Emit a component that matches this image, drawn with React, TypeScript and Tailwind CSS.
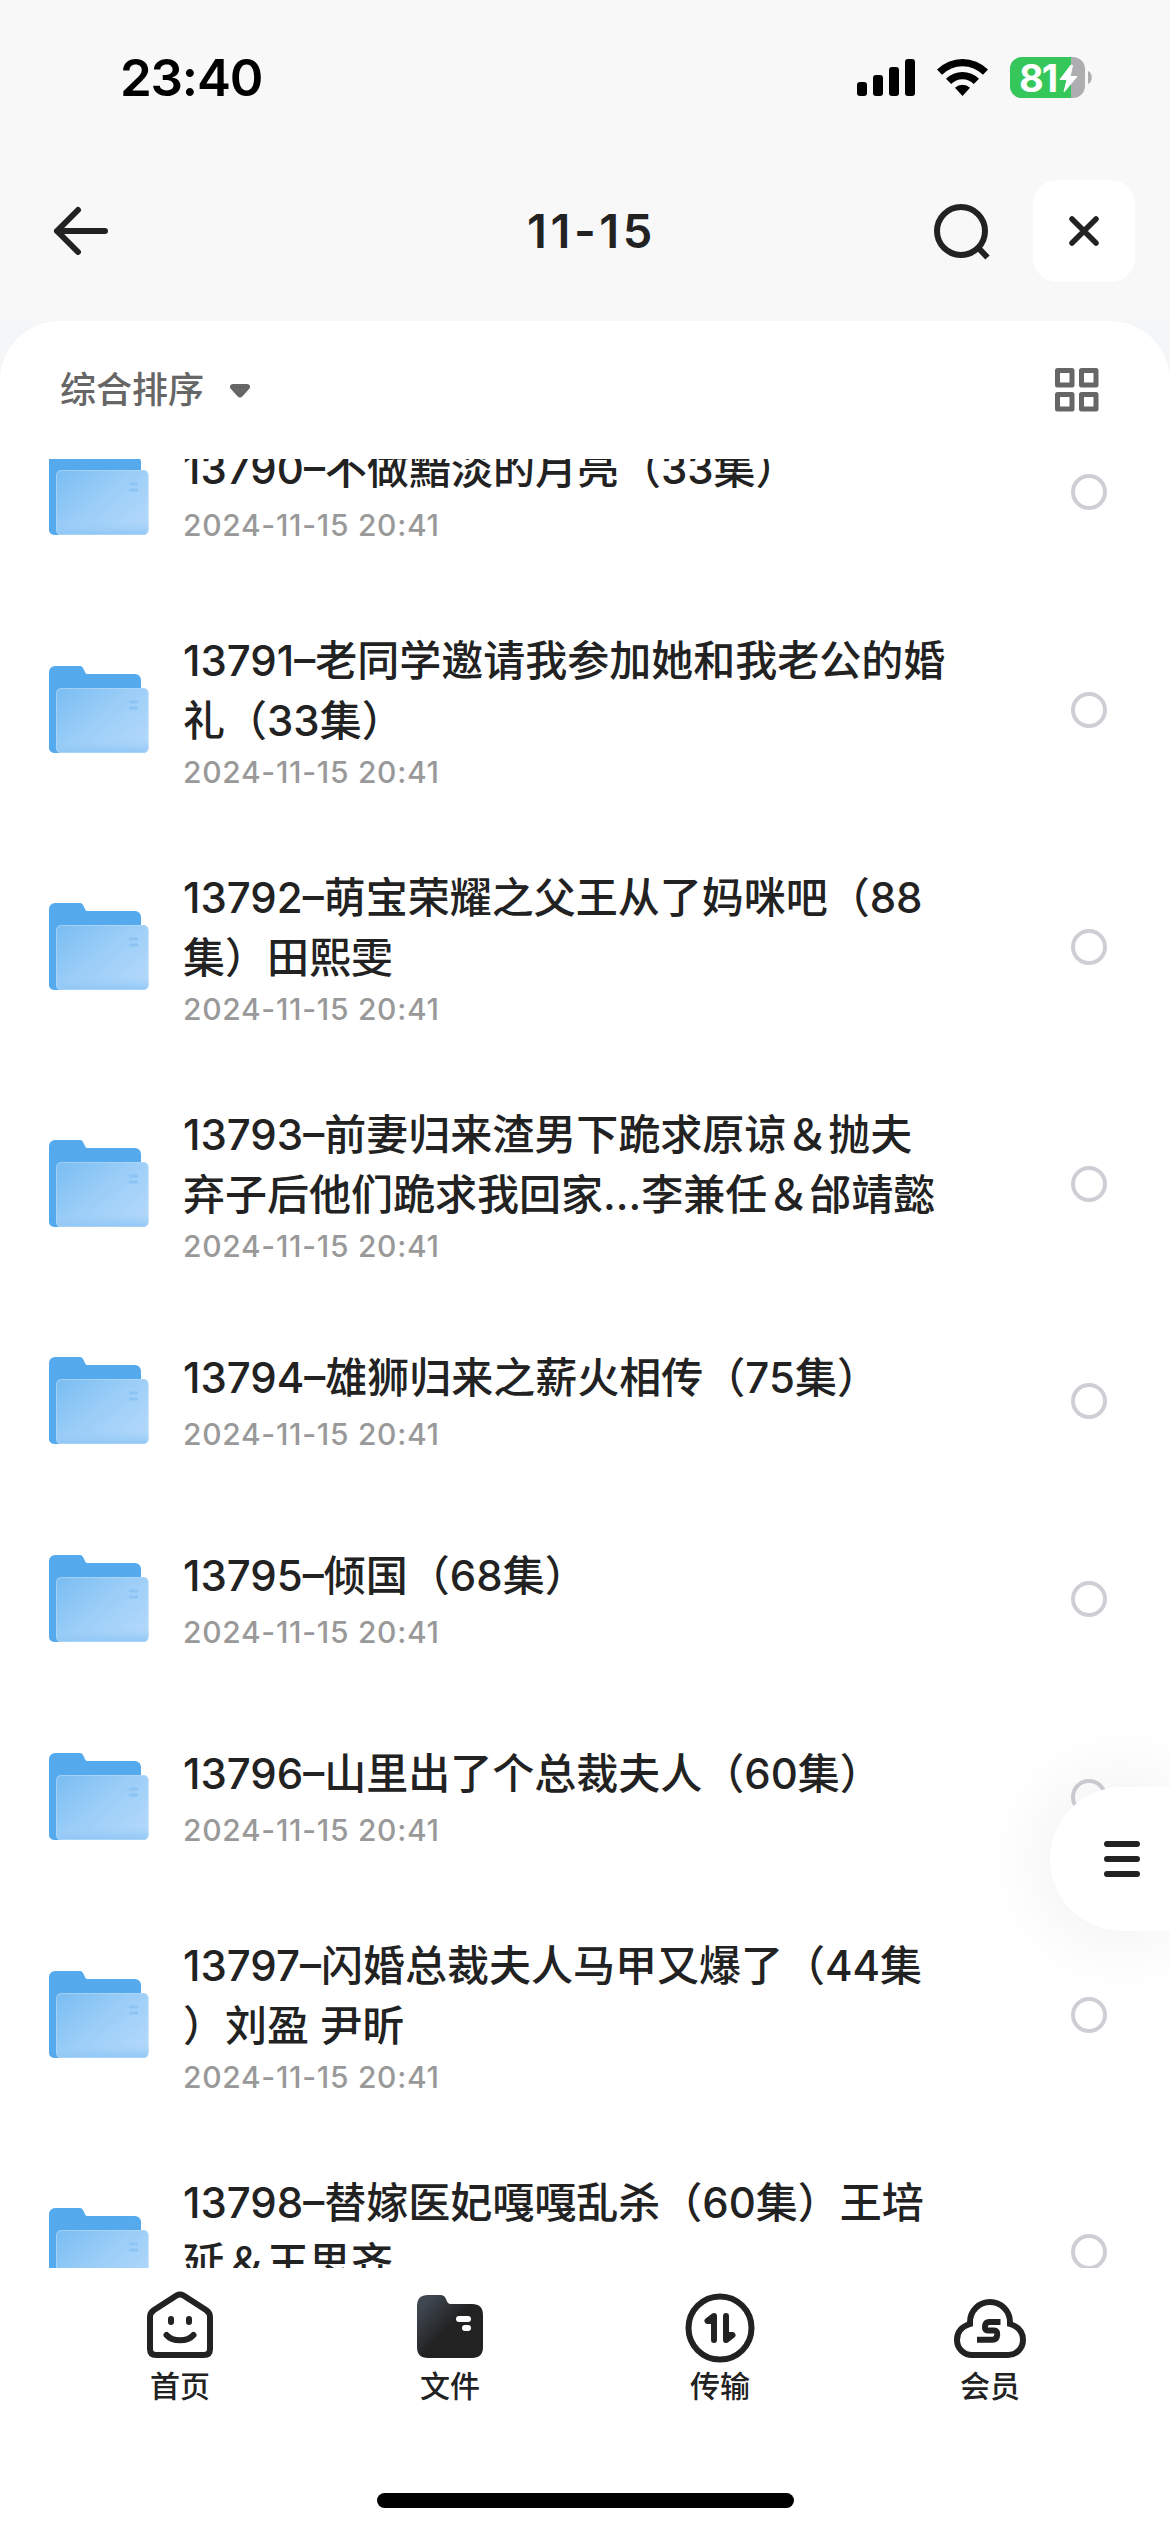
type FileItem = { lines: string[]; date: string };

const files: FileItem[] = [
  { lines: ["13790–不做黯淡的月亮（33集）"], date: "2024-11-15 20:41" },
  { lines: ["13791–老同学邀请我参加她和我老公的婚", "礼（33集）"], date: "2024-11-15 20:41" },
  { lines: ["13792–萌宝荣耀之父王从了妈咪吧（88", "集）田熙雯"], date: "2024-11-15 20:41" },
  { lines: ["13793–前妻归来渣男下跪求原谅＆抛夫", "弃子后他们跪求我回家…李兼任＆邰靖懿"], date: "2024-11-15 20:41" },
  { lines: ["13794–雄狮归来之薪火相传（75集）"], date: "2024-11-15 20:41" },
  { lines: ["13795–倾国（68集）"], date: "2024-11-15 20:41" },
  { lines: ["13796–山里出了个总裁夫人（60集）"], date: "2024-11-15 20:41" },
  { lines: ["13797–闪婚总裁夫人马甲又爆了（44集", "）刘盈 尹昕"], date: "2024-11-15 20:41" },
  { lines: ["13798–替嫁医妃嘎嘎乱杀（60集）王培", "延＆王思齐"], date: "2024-11-15 20:41" },
];

const StatusBar = () => (
  <div className="flex h-[156px] justify-between pl-[120px] pr-[77px] pt-[57px]">
    <div className="text-[51px] font-semibold leading-[42px] tracking-[-1.2px] text-black">23:40</div>
    <div className="flex items-start">
      <svg width="60" height="41" viewBox="0 0 60 41" className="mr-[20px]">
        <rect x="0" y="25" width="10" height="14" rx="3" />
        <rect x="16" y="18" width="10" height="21" rx="3" />
        <rect x="32" y="10" width="10" height="29" rx="3" />
        <rect x="48" y="2" width="10" height="37" rx="3" />
      </svg>
      <svg width="51" height="41" viewBox="0 0 51 41" className="mr-[22px]">
        <path d="M0 12.5a36 36 0 0 1 51 0l-5 5.2a29 29 0 0 0-41 0z" />
        <path d="M9 21.7a23.5 23.5 0 0 1 33 0l-5.2 5.2a16 16 0 0 0-22.6 0z" />
        <path d="M18 30.7a11 11 0 0 1 15 0L25.5 39z" />
      </svg>
      {/* battery */}
      <div className="relative h-[41px] w-[83px]">
        <div className="flex h-[41px] w-[75px] overflow-hidden rounded-[12px] bg-[#aeaeb0]">
          <div className="h-full w-[61px] bg-[#35c759]" />
        </div>
        <span className="absolute left-[9px] top-0 text-[38px] font-bold leading-[42px] tracking-[-2px] text-white">
          81
        </span>
        <svg width="20" height="29" viewBox="0 0 20 29" className="absolute left-[49px] top-[7px]">
          <path d="M12 1 1 15.5h7L5 28 18 12.5h-7L13.5 1.5z" fill="#fff" stroke="#fff" strokeLinejoin="round" />
        </svg>
        <svg width="5" height="14" viewBox="0 0 5 14" className="absolute left-[78px] top-[14px]">
          <path d="M0 0c5 2 5 11 0 13z" fill="#aeaeb0" />
        </svg>
      </div>
    </div>
  </div>
);

const Header = () => (
  <div className="grid h-[165px] grid-cols-3 items-start pl-[52px] pr-[36px] pt-[24px]">
    <svg width="60" height="102" viewBox="0 0 60 102" fill="none" stroke="#222" strokeWidth="6" strokeLinecap="round" strokeLinejoin="round">
      <path d="M26 30 5 51l21 21M5 51h48" />
    </svg>
    <div className="pr-[3px] text-center text-[47px] font-semibold leading-[102px] tracking-[3.6px] text-[#222]">
      11-15
    </div>
    <div className="flex items-center justify-end">
      <svg width="60" height="60" viewBox="0 0 60 60" fill="none" stroke="#222" strokeWidth="6" className="mr-[40px]">
        <circle cx="28" cy="30" r="24" />
        <path d="m44.5 46 10 10.5" />
      </svg>
      <div className="mr-[-1px] flex size-[102px] items-center justify-center rounded-[24px] bg-white">
        <svg width="30" height="30" viewBox="0 0 30 30" stroke="#222" strokeWidth="5.5" strokeLinecap="round">
          <path d="m3 3 24 24M27 3 3 27" />
        </svg>
      </div>
    </div>
  </div>
);

const SortBar = () => (
  <div className="flex h-[138px] shrink-0 items-center justify-between pl-[60px] pr-[70px]">
    <div className="flex items-center gap-[26px] text-[36px] font-medium leading-[52px] text-[#666]">
      综合排序
      <svg width="20" height="14" viewBox="0 0 20 14" className="mt-[2px]">
        <path d="M3 0h14c3 0 4 3 2 5l-6.5 7.2a3.5 3.5 0 0 1-5 0L1 5C-1 3 0 0 3 0z" fill="#666" />
      </svg>
    </div>
    <svg width="45" height="45" viewBox="0 0 45 45" fill="none" stroke="#666" strokeWidth="5" strokeLinejoin="round">
      <rect x="2.5" y="2.5" width="14.5" height="14.5" />
      <rect x="26.5" y="2.5" width="14.5" height="14.5" />
      <rect x="2.5" y="26.5" width="14.5" height="14.5" />
      <rect x="26.5" y="26.5" width="14.5" height="14.5" />
    </svg>
  </div>
);

const FolderIcon = () => (
  <svg width="100" height="88" viewBox="0 0 100 88" className="shrink-0">
    <path d="M0 6a6 6 0 0 1 6-6h25c4 0 4.5 8 7 8h48a6 6 0 0 1 6 6v60L8 87H5a5 5 0 0 1-5-5z" fill="#55aaee" />
    <rect x="7" y="22" width="92.5" height="65" rx="5" fill="url(#folderFront)" />
    <rect x="7" y="72" width="92.5" height="15" rx="5" fill="url(#folderFoot)" />
    <rect x="7.5" y="22.5" width="91.5" height="64" rx="5" fill="none" stroke="#b9dcf8" strokeOpacity=".6" />
    <rect x="80" y="34.5" width="9" height="3" rx="1" fill="#8cc4f5" />
    <rect x="80" y="40.5" width="9" height="3" rx="1" fill="#8cc4f5" />
  </svg>
);

const FileRow = ({ file }: { file: FileItem }) => {
  const single = file.lines.length === 1;

  return (
    <div
      className={`flex shrink-0 items-center pl-[49px] pr-[63px] ${single ? "h-[198px]" : "h-[237px]"}`}
    >
      <FolderIcon />
      <div className={`ml-[34px] flex-1 ${single ? "pt-px" : "pt-[5px]"}`}>
        <div className="text-[42px] font-medium leading-[60px] text-[#222]">
          {file.lines.map((line) => (
            <div key={line} className="whitespace-nowrap">
              {line}
            </div>
          ))}
        </div>
        <div
          className={`text-[30px] font-medium leading-[42px] tracking-[0.7px] text-[#999] ${single ? "mt-[5px]" : "mt-0"}`}
        >
          {file.date}
        </div>
      </div>
      <div className="size-[36px] rounded-full border-[4px] border-[#cfced5]" />
    </div>
  );
};

const HomeIcon = () => (
  <svg width="72" height="72" viewBox="0 0 72 72" fill="none" stroke="#222" strokeWidth="6" strokeLinejoin="round">
    <path d="M32.5 6.5a7 7 0 0 1 7 0L62 21q4 2.8 4 7v32q0 6-6 6H12q-6 0-6-6V28q0-4.2 4-7z" />
    <path d="M27 30v3M45 30v3" strokeLinecap="round" />
    <path d="M22.5 46c6 7 21 7 27 0" strokeLinecap="round" />
  </svg>
);

const FilesIcon = () => (
  <svg width="72" height="72" viewBox="0 0 72 72">
    <path d="M3 17Q3 6 14 6h13c6 0 5 9 9 9h22q11 0 11 11v32q0 11-11 11H14Q3 69 3 58z" fill="url(#tabFolder)" />
    <rect x="42" y="27" width="15" height="6" rx="3" fill="#fff" />
    <rect x="48" y="36" width="9" height="6" rx="3" fill="#fff" />
  </svg>
);

const TransferIcon = () => (
  <svg
    width="72"
    height="72"
    viewBox="0 0 72 72"
    fill="none"
    stroke="#222"
    strokeWidth="6"
    strokeLinecap="round"
    strokeLinejoin="round"
    className="overflow-visible"
  >
    <circle cx="36" cy="39" r="31.5" />
    <path d="M30 51V27l-6.5 5H30M42 27v24l6.5-5H42" />
  </svg>
);

const MemberIcon = () => (
  <svg width="72" height="72" viewBox="0 0 72 72" fill="none" stroke="#222" strokeWidth="6">
    <path d="M18 66A15 15 0 0 1 3 51Q3 39 16 35V33a20 20 0 0 1 40 0v2Q69 39 69 51A15 15 0 0 1 54 66z" />
    <path d="M46.5 33H35q-3.5 0-4 4.300t3 4.300h6q3.8 0 3.2 4.600t-4.7 4.600H23" />
  </svg>
);

const tabs = [
  { label: "首页", icon: <HomeIcon /> },
  { label: "文件", icon: <FilesIcon /> },
  { label: "传输", icon: <TransferIcon /> },
  { label: "会员", icon: <MemberIcon /> },
];

const TabBar = () => (
  <nav className="flex h-[264px] shrink-0 flex-col items-center justify-between bg-white pb-[24px] pt-[21px]">
    <div className="grid w-[1080px] grid-cols-4">
      {tabs.map((tab) => (
        <div key={tab.label} className="flex flex-col items-center">
          {tab.icon}
          <span className="mt-[4px] text-[30px] font-medium leading-[42px] text-[#222]">{tab.label}</span>
        </div>
      ))}
    </div>
    {/* home indicator */}
    <div className="h-[15px] w-[417px] rounded-full bg-black" />
  </nav>
);

const App = () => {
  return (
    <div className="relative flex h-[2532px] w-[1170px] flex-col overflow-hidden bg-[#f4f6f8] font-['Inter','Noto_Sans_CJK_SC',sans-serif]">
      {/* shared gradients */}
      <svg width="0" height="0" className="absolute">
        <defs>
          <linearGradient id="folderFront" x1="0" y1="0" x2="1" y2="0.8">
            <stop offset="0" stopColor="#79bdf2" />
            <stop offset=".5" stopColor="#9acdf7" />
            <stop offset="1" stopColor="#b3d8fb" />
          </linearGradient>
          <linearGradient id="folderFoot" x1="0" y1="0" x2="0" y2="1">
            <stop offset="0" stopColor="#9fd0f8" stopOpacity="0" />
            <stop offset="1" stopColor="#8fc6f5" />
          </linearGradient>
          <linearGradient id="tabFolder" x1="0.1" y1="0.15" x2="0.5" y2="0.5">
            <stop offset="0" stopColor="#3f4751" />
            <stop offset="1" stopColor="#222" />
          </linearGradient>
        </defs>
      </svg>

      <header className="shrink-0 bg-[#f8f8f8]">
        <StatusBar />
        <Header />
      </header>

      <main className="flex min-h-0 flex-1 flex-col rounded-t-[60px] bg-white">
        <SortBar />
        <div className="min-h-0 flex-1 overflow-hidden">
          <div className="-mt-[66px] flex flex-col">
            {files.map((file) => (
              <FileRow key={file.lines[0]} file={file} />
            ))}
          </div>
        </div>
      </main>

      <TabBar />

      {/* floating menu handle */}
      <button
        type="button"
        aria-label="Menu"
        className="absolute right-0 top-[1787px] flex h-[144px] w-[120px] items-center rounded-l-full bg-white pl-[54px] shadow-[0_0_90px_rgba(0,0,0,0.08)]"
      >
        <span className="flex flex-col gap-[9px]">
          <span className="h-[6px] w-[36px] rounded-full bg-[#222]" />
          <span className="h-[6px] w-[36px] rounded-full bg-[#222]" />
          <span className="h-[6px] w-[36px] rounded-full bg-[#222]" />
        </span>
      </button>
    </div>
  );
};

export default App;
